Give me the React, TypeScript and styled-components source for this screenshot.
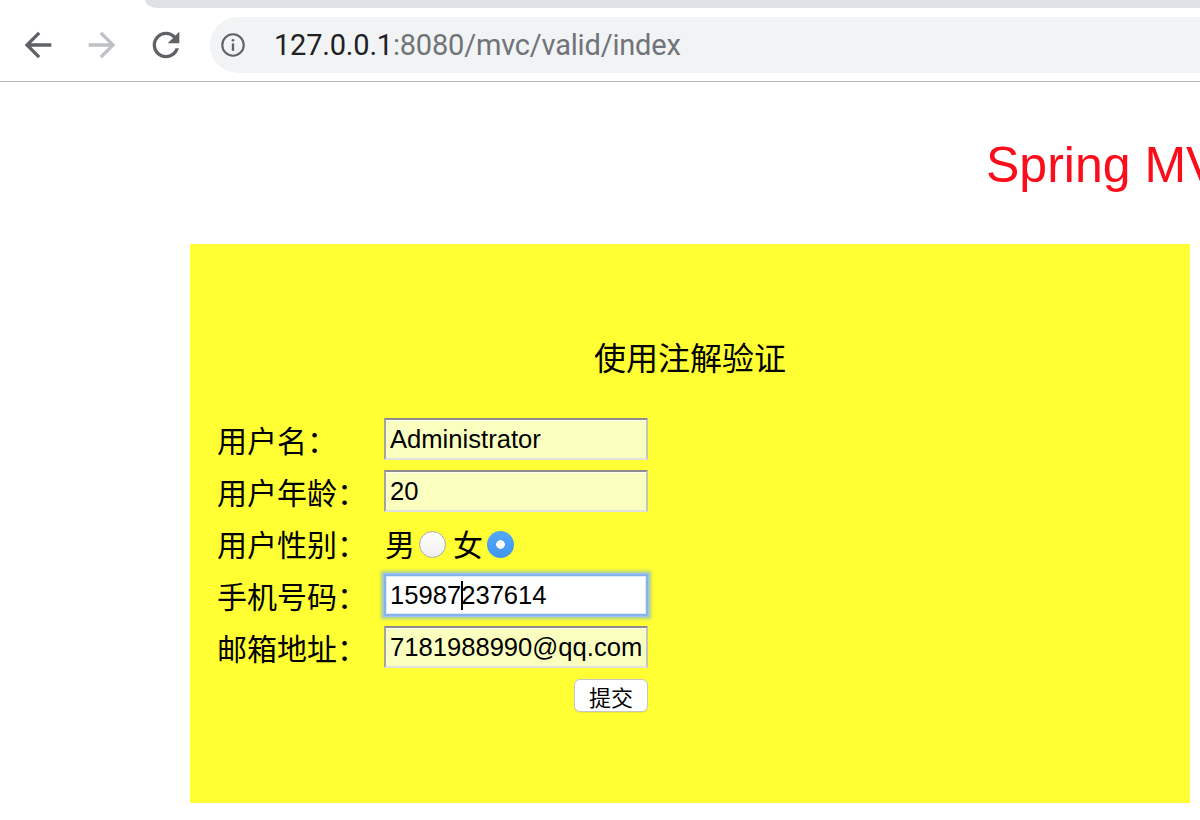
import React from "react";
import styled, { createGlobalStyle } from "styled-components";

const Global = createGlobalStyle`
  html, body { margin: 0; padding: 0; width: 1200px; height: 820px; overflow: hidden; background: #fff; }
  * { box-sizing: border-box; }
`;

const Browser = styled.div`
  width: 1200px;
  height: 820px;
  display: flex;
  flex-direction: column;
  overflow: hidden;
  font-family: "Liberation Sans", "Noto Sans CJK SC", sans-serif;
`;

const TabStrip = styled.div`
  height: 8px;
  flex-shrink: 0;
  display: flex;
  background: #fff;
`;

const TabStripFill = styled.div`
  margin-left: 145px;
  flex: 1;
  background: #dee1e6;
  border-bottom-left-radius: 14px 8px;
`;

const Toolbar = styled.div`
  height: 74px;
  flex-shrink: 0;
  display: flex;
  align-items: center;
  gap: 16px;
  padding-left: 14px;
  border-bottom: 1px solid #b9b9b9;
  overflow: hidden;
`;

const NavButton = styled.div`
  width: 48px;
  height: 48px;
  flex-shrink: 0;
  display: flex;
  align-items: center;
  justify-content: center;
`;

const Omnibox = styled.div`
  margin-left: 4px;
  width: 1100px;
  height: 56px;
  flex-shrink: 0;
  border-radius: 28px;
  background: #f1f3f4;
  display: flex;
  align-items: center;
  padding-left: 9px;
`;

const Url = styled.div`
  margin-left: 27px;
  font-family: Roboto, "Liberation Sans", sans-serif;
  font-size: 29px;
  letter-spacing: -0.2px;
  color: #202124;
  white-space: nowrap;
`;

const UrlRest = styled.span`
  color: #707478;
`;

const Page = styled.main`
  flex: 1;
  overflow: hidden;
`;

const Heading = styled.h1`
  margin: 53px 0 0;
  padding-left: 986px;
  font-family: "Liberation Sans", sans-serif;
  font-weight: 400;
  font-size: 50px;
  line-height: 60px;
  color: #fb0d1b;
  white-space: nowrap;
`;

const Panel = styled.section`
  margin: 49px 0 0 190px;
  width: 1000px;
  height: 559px;
  background: #ffff33;
  padding-top: 92px;
`;

const PanelTitle = styled.h2`
  margin: 0 0 42px;
  text-align: center;
  font-family: "Noto Sans CJK SC", sans-serif;
  font-weight: 400;
  font-size: 32px;
  line-height: 40px;
  color: #000;
`;

const Form = styled.form`
  margin-left: 27px;
  display: grid;
  grid-template-columns: 167px 264px;
  grid-auto-rows: 42px;
  row-gap: 10px;
  align-items: center;
`;

const Label = styled.label`
  font-family: "Noto Sans CJK SC", sans-serif;
  font-size: 30px;
  line-height: 42px;
  color: #000;
  white-space: nowrap;
`;

const Field = styled.div`
  position: relative;
  width: 264px;
  height: 42px;
`;

const TextInput = styled.input<{ $focused?: boolean }>`
  display: block;
  width: 264px;
  height: 42px;
  margin: 0;
  padding: 0 2px 0 4px;
  font-family: "Liberation Sans", sans-serif;
  font-size: 25.6px;
  color: #000;
  outline: none;
  border-style: solid;
  border-width: 2px;
  border-color: ${(p) => (p.$focused ? "#84b3ef" : "#8c8c8c #c4c4c4 #e2e2e2 #a4a4a4")};
  background: ${(p) => (p.$focused ? "#fff" : "#faffc0")};
  box-shadow: ${(p) =>
    p.$focused
      ? "inset 0 0 0 1px #dbe9fb, 0 0 0 1px #9cc3f2, 0 0 3px 3px rgba(90, 160, 250, 0.5)"
      : "inset 0 1px 0 #fff"};
`;

const Caret = styled.span`
  position: absolute;
  left: 77px;
  top: 7px;
  width: 2px;
  height: 29px;
  background: #000;
`;

const RadioGroup = styled.div`
  display: flex;
  align-items: center;
  font-family: "Noto Sans CJK SC", sans-serif;
  font-size: 30px;
  line-height: 42px;
  color: #000;
  padding-left: 1px;
`;

const Radio = styled.input`
  appearance: none;
  -webkit-appearance: none;
  width: 27px;
  height: 27px;
  margin: 3px 7px 0 4px;
  border-radius: 50%;
  border: 1px solid #a9a9a9;
  background: linear-gradient(#ffffff, #efefef);
  outline: none;
  &:checked {
    border: none;
    background: radial-gradient(circle, #fff 0 4px, transparent 4.6px), linear-gradient(#55a7f7, #3f96f2);
  }
`;

const ButtonCell = styled.div`
  grid-column: 2;
  align-self: start;
  justify-self: end;
  margin-top: 1px;
`;

const Submit = styled.button`
  width: 74px;
  height: 33px;
  padding: 0;
  border: 1px solid #c6c6c6;
  border-radius: 6px;
  background: #fff;
  box-shadow: 0 1px 1px rgba(0, 0, 0, 0.08);
  font-family: "Noto Sans CJK SC", sans-serif;
  font-size: 22px;
  line-height: 1;
  color: #000;
`;

const BackIcon = ({ color }: { color: string }) => (
  <svg width="40" height="40" viewBox="0 0 24 24">
    <path fill={color} d="M20 11H7.83l5.59-5.59L12 4l-8 8 8 8 1.41-1.41L7.83 13H20v-2z" />
  </svg>
);

const ForwardIcon = ({ color }: { color: string }) => (
  <svg width="40" height="40" viewBox="0 0 24 24">
    <path fill={color} d="M4 11h12.17l-5.59-5.59L12 4l8 8-8 8-1.41-1.41L16.17 13H4v-2z" />
  </svg>
);

const ReloadIcon = () => (
  <svg width="40" height="40" viewBox="0 0 24 24">
    <path
      fill="#5f6368"
      d="M17.65 6.35C16.2 4.9 14.21 4 12 4c-4.42 0-7.99 3.58-7.99 8s3.57 8 7.99 8c3.73 0 6.84-2.55 7.73-6h-2.08c-.82 2.33-3.04 4-5.65 4-3.31 0-6-2.69-6-6s2.69-6 6-6c1.66 0 3.14.69 4.22 1.78L13 11h7V4l-2.35 2.35z"
    />
  </svg>
);

const InfoIcon = () => (
  <svg width="28" height="28" viewBox="0 0 24 24">
    <circle cx="12" cy="12" r="9.2" fill="none" stroke="#5f6368" strokeWidth="1.8" />
    <rect x="11" y="10.6" width="2" height="6.4" fill="#5f6368" />
    <circle cx="12" cy="7.9" r="1.15" fill="#5f6368" />
  </svg>
);

export default function App() {
  return (
    <Browser>
      <Global />
      <TabStrip>
        <TabStripFill />
      </TabStrip>
      <Toolbar>
        <NavButton>
          <BackIcon color="#5f6368" />
        </NavButton>
        <NavButton>
          <ForwardIcon color="#bdc1c6" />
        </NavButton>
        <NavButton>
          <ReloadIcon />
        </NavButton>
        <Omnibox>
          <InfoIcon />
          <Url>
            127.0.0.1<UrlRest>:8080/mvc/valid/index</UrlRest>
          </Url>
        </Omnibox>
      </Toolbar>
      <Page>
        <Heading>Spring MVC</Heading>
        <Panel>
          <PanelTitle>使用注解验证</PanelTitle>
          <Form onSubmit={(e) => e.preventDefault()}>
            <Label>用户名：</Label>
            <TextInput defaultValue="Administrator" />
            <Label>用户年龄：</Label>
            <TextInput defaultValue="20" />
            <Label>用户性别：</Label>
            <RadioGroup>
              男<Radio type="radio" name="sex" />女<Radio type="radio" name="sex" defaultChecked />
            </RadioGroup>
            <Label>手机号码：</Label>
            <Field>
              <TextInput $focused defaultValue="15987237614" />
              <Caret />
            </Field>
            <Label>邮箱地址：</Label>
            <TextInput defaultValue="7181988990@qq.com" />
            <ButtonCell>
              <Submit type="submit">提交</Submit>
            </ButtonCell>
          </Form>
        </Panel>
      </Page>
    </Browser>
  );
}
